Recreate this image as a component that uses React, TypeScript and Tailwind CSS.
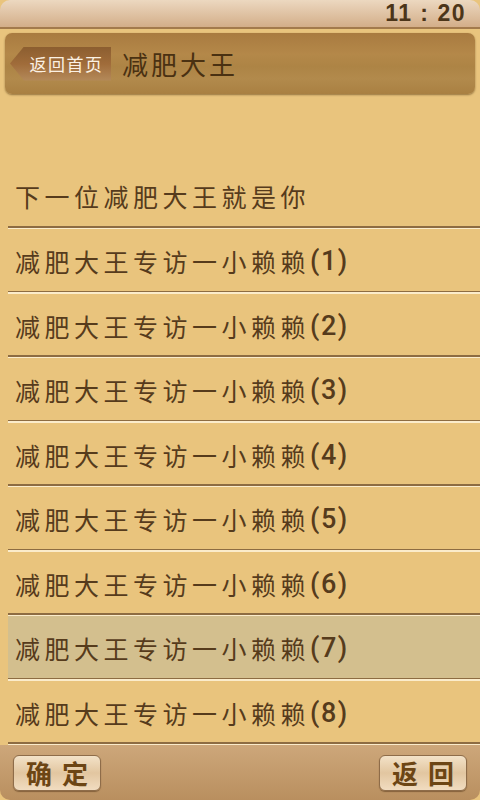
import React from "react";

const items = [1, 2, 3, 4, 5, 6, 7, 8];

const font = { fontFamily: '"Noto Sans CJK SC", "Noto Sans", sans-serif' };
const latin = { fontFamily: 'Roboto, "Noto Sans CJK SC", sans-serif' };

const Divider = () => (
  <div className="ml-[8px]">
    <div className="h-[1.5px] bg-[#8d6c42]" />
    <div className="h-[1.5px] bg-[#fbeccb]" />
  </div>
);

const Row = ({ n, active }: { n: number; active?: boolean }) => (
  <div className={`ml-[8px] h-[61.5px] flex items-center pl-[7px] pt-[4px] ${active ? "bg-[#d3bf8e]" : ""}`}>
    <span className="text-[25px] tracking-[4.5px] text-[#563b1c] leading-none">减肥大王专访一小赖赖</span>
    <span className="text-[27px] tracking-[1.5px] font-medium text-[#563b1c] leading-none" style={latin}>({n})</span>
  </div>
);

export default function App() {
  return (
    <div className="w-[480px] h-[800px] bg-[#e9c47d] flex flex-col overflow-hidden" style={font}>
      {/* status bar */}
      <div className="h-[29px] rounded-t-[10px] bg-gradient-to-b from-[#ecd8c0] to-[#d3ae89] border-b-[2px] border-[#a37a4c] flex items-center justify-end pr-[14px]">
        <span className="text-[23px] font-bold text-[#4c3519] leading-none tracking-[1.5px]" style={{ fontFamily: '"Liberation Sans", sans-serif' }}>11 : 20</span>
      </div>

      {/* title bar */}
      <div className="mx-[5px] mt-[4px] h-[61px] rounded-[7px] bg-[linear-gradient(to_bottom,#a97b40_0%,#b48849_35%,#ad8445_55%,#b28a4c_75%,#a98042_100%)] shadow-[0_1px_2px_rgba(90,60,20,0.6)] flex items-center pl-[5px]">
        <div className="relative h-[34px] w-[101px] flex items-center justify-center pl-[12px] bg-gradient-to-b from-[#8c5e30] via-[#a06c3a] to-[#b48a5a] [clip-path:polygon(14px_0,100%_0,100%_100%,14px_100%,0_50%)]">
          <span className="text-[17px] tracking-[1.5px] text-[#fbf1e4] leading-none">返回首页</span>
        </div>
        <span className="ml-[11px] text-[26px] tracking-[3px] text-[#4a3112] leading-none">减肥大王</span>
      </div>

      {/* list */}
      <div className="mt-[70px]">
        <div className="ml-[8px] h-[62px] flex items-center pl-[7px] pt-[3px]">
          <span className="text-[25px] tracking-[4.5px] text-[#563b1c] leading-none">下一位减肥大王就是你</span>
        </div>
        <Divider />
        {items.map((n, i) => (
          <React.Fragment key={n}>
            <Row n={n} active={i === 6} />
            <Divider />
          </React.Fragment>
        ))}
      </div>

      {/* footer */}
      <div className="flex-1 bg-gradient-to-b from-[#cda77a] to-[#b98f5f] flex items-center justify-between px-[13px] rounded-b-[10px]">
        <button className="w-[88px] h-[36px] rounded-[6px] border border-[#8e6c49] bg-gradient-to-b from-[#f3e2c8] via-[#e2c6a0] to-[#f1dcc0] shadow-[0_1px_1px_rgba(80,50,20,0.5)] text-[26px] font-bold text-[#6c4514] tracking-[10px] pl-[10px] leading-none">确定</button>
        <button className="w-[88px] h-[36px] rounded-[6px] border border-[#8e6c49] bg-gradient-to-b from-[#f3e2c8] via-[#e2c6a0] to-[#f1dcc0] shadow-[0_1px_1px_rgba(80,50,20,0.5)] text-[26px] font-bold text-[#6c4514] tracking-[10px] pl-[10px] leading-none">返回</button>
      </div>
    </div>
  );
}
